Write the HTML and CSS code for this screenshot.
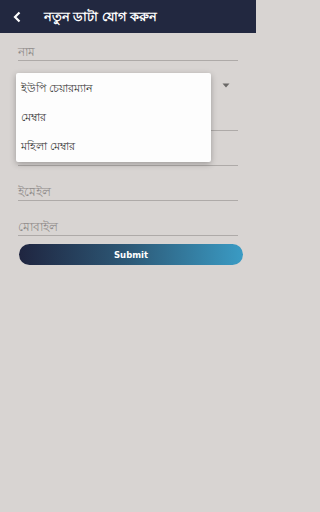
FILE: index.html
```html
<!DOCTYPE html>
<html lang="bn">
<head>
<meta charset="utf-8">
<link rel="stylesheet" href="styles.css">
</head>
<body>
<div class="app">
  <header class="bar">
    <svg class="back" width="10" height="12" viewBox="0 0 10 12"><path d="M7.5 1.5 L3 6 L7.5 10.5" fill="none" stroke="#fff" stroke-width="2.2"/></svg>
    <div class="title">নতুন ডাটা যোগ করুন</div>
  </header>
  <main class="form">
    <div class="field"><span class="ph">নাম</span></div>
    <div class="field noline">
      <span class="ph"></span>
      <svg class="arrow" width="8" height="5" viewBox="0 0 8 5"><path d="M0.5 0.5 H7.5 L4 4.5 Z" fill="#6a6867"/></svg>
    </div>
    <div class="field"><span class="ph"></span></div>
    <div class="field"><span class="ph"></span></div>
    <div class="field"><span class="ph">ইমেইল</span></div>
    <div class="field"><span class="ph">মোবাইল</span></div>
    <button class="submit">Submit</button>
  </main>
  <div class="menu">
    <div class="item">ইউপি চেয়ারম্যান</div>
    <div class="item">মেম্বার</div>
    <div class="item">মহিলা মেম্বার</div>
  </div>
</div>
</body>
</html>
```
FILE: styles.css
```css
* { box-sizing: border-box; }
html, body { margin: 0; padding: 0; }
body {
  width: 256px;
  height: 512px;
  background: #d8d4d2;
  font-family: "Noto Sans", "DejaVu Sans", sans-serif;
  overflow: hidden;
}
.app { position: relative; width: 256px; height: 512px; }
.bar {
  height: 33px;
  background: #222840;
  display: flex;
  align-items: center;
  padding-left: 12px;
}
.back { display: block; margin-right: 22px; }
.title {
  color: #fff;
  font-size: 13px;
  font-weight: bold;
  line-height: 1;
}
.form {
  padding: 0 18px 0 18px;
  display: flex;
  flex-direction: column;
}
.field {
  height: 35px;
  border-bottom: 1px solid #aeaaa8;
  display: flex;
  align-items: flex-end;
  justify-content: space-between;
  padding-bottom: 0;
}
.field:first-child { height: 28px; }
.field.noline { border-bottom-color: transparent; }
.ph {
  color: #8e8a89;
  font-size: 12px;
  line-height: 16px;
}
.arrow { margin-right: 8px; margin-bottom: 7px; }
.submit {
  margin: 8px -5px 0 1px;
  height: 21px;
  border: none;
  border-radius: 11px;
  background: linear-gradient(90deg, #1f2540 0%, #2d5a78 50%, #3a9bc4 100%);
  color: #fff;
  font-family: "DejaVu Sans", sans-serif;
  font-weight: bold;
  font-size: 8.5px;
  padding: 0;
}
.menu {
  position: absolute;
  left: 16px;
  top: 73px;
  width: 195px;
  height: 89px;
  background: #fdfdfd;
  box-shadow: 0 2px 6px rgba(0,0,0,0.28);
  border-radius: 2px;
  display: flex;
  flex-direction: column;
  padding-top: 2px;
}
.item {
  height: 30px;
  display: flex;
  align-items: center;
  padding-left: 5px;
  font-size: 10.5px;
  color: #3a3a3a;
}
```
